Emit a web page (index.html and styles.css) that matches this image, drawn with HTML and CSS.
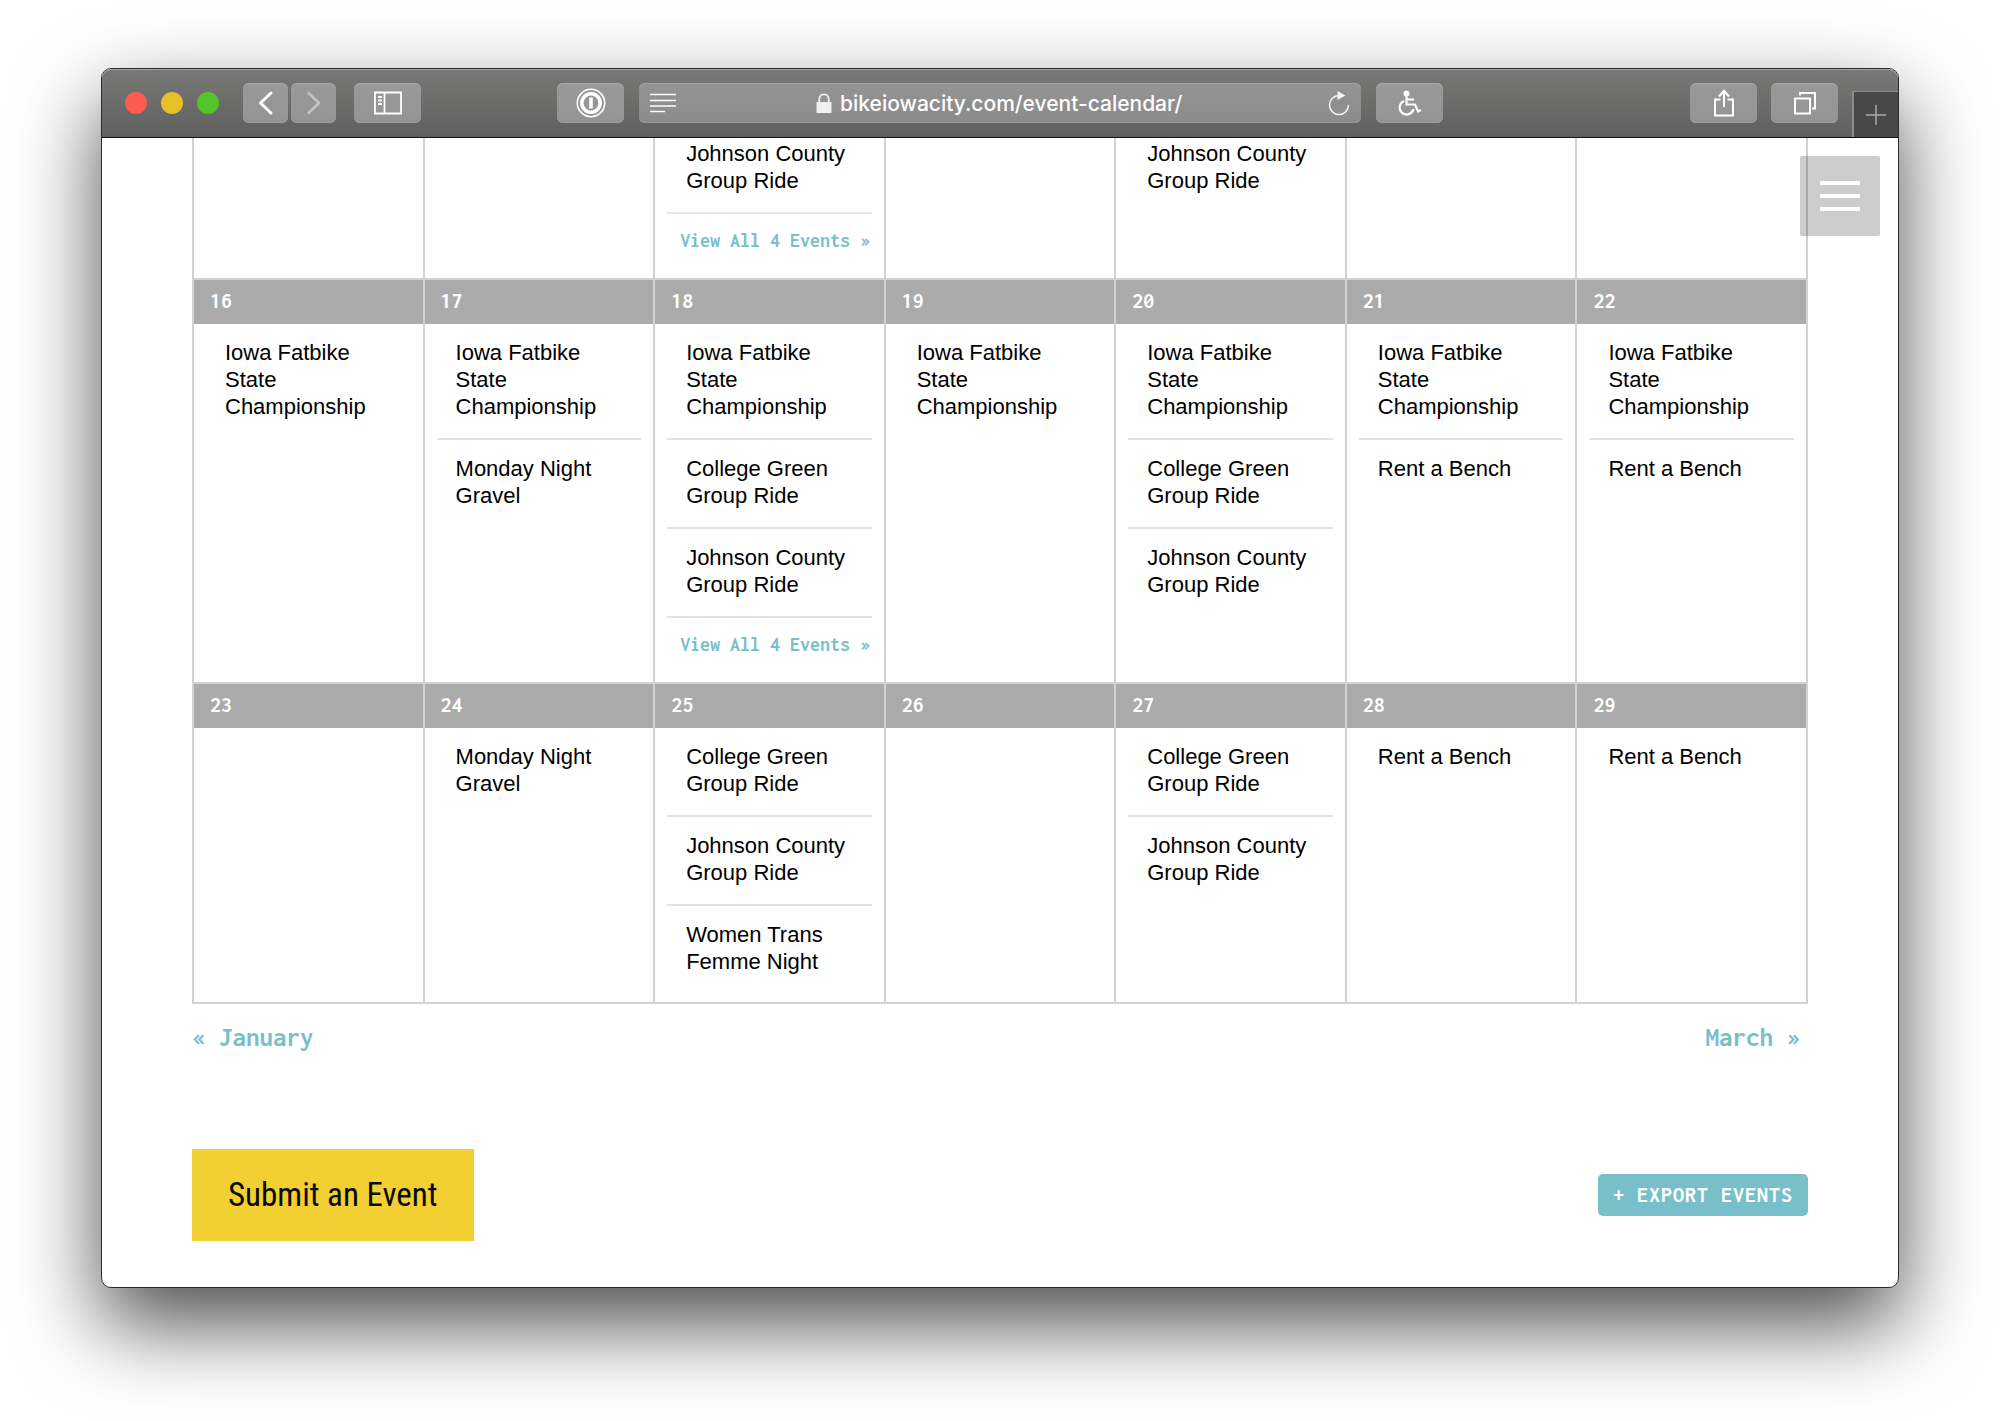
FILE: index.html
```html
<!DOCTYPE html>
<html lang="en">
<head>
<meta charset="utf-8">
<title>Event Calendar</title>
<link rel="stylesheet" href="styles.css">
</head>
<body>
<div class="window">
    <header class="toolbar">
        <div class="tools">
            <div class="lights">
                <button class="light close" aria-label="Close"></button>
                <button class="light min" aria-label="Minimize"></button>
                <button class="light max" aria-label="Zoom"></button>
            </div>
            <div class="history">
                <button class="btn narrow" aria-label="Back"><svg width="45" height="38" viewBox="0 0 45 38"><path d="M28 9 17.500 19 28 29" fill="none" stroke="#fff" stroke-width="3" stroke-linecap="round" stroke-linejoin="round"/></svg></button>
                <button class="btn narrow" aria-label="Forward"><svg width="45" height="38" viewBox="0 0 45 38"><path d="M17.500 9 28 19 17.500 29" fill="none" stroke="#c4c4c4" stroke-width="2.500" stroke-linecap="round" stroke-linejoin="round"/></svg></button>
            </div>
            <button class="btn" aria-label="Sidebar"><svg width="28" height="24" viewBox="0 0 28 24"><path d="M1 1.500h26v21H1zM10.500 1.500v21M4 6h4M4 9.500h4M4 13h4" fill="none" stroke="#fff" stroke-width="1.800"/></svg></button>
        </div>
        <div class="location">
            <button class="btn" aria-label="Password manager"><svg width="30" height="30" viewBox="0 0 30 30"><circle cx="15" cy="15" r="13.700" fill="none" stroke="#fff" stroke-width="1.600"/><circle cx="15" cy="15" r="9.200" fill="none" stroke="#fff" stroke-width="3.600"/><path d="M13.200 9.500h3.600v11h-3.600z" fill="#fff"/></svg></button>
            <div class="address">
                <button class="plain" aria-label="Reader"><svg width="26" height="20" viewBox="0 0 26 20"><path d="M0 1.500h26M0 7.500h26M0 13h26M0 18.500h15" stroke="#fff" stroke-width="1.600"/></svg></button>
                <label class="url">
                    <svg width="16" height="20" viewBox="0 0 16 20"><path d="M.5 9h15v11H.5z" fill="#f0f0f0"/><path d="M3.300 9V6a4.700 4.700 0 0 1 9.400 0v3" fill="none" stroke="#f0f0f0" stroke-width="1.800"/></svg>
                    <input type="text" value="bikeiowacity.com/event-calendar/" aria-label="Address">
                </label>
                <button class="plain" aria-label="Reload"><svg width="22" height="26" viewBox="0 0 22 26"><path d="M11 5.500a9.500 9.500 0 1 0 9.500 9.500" fill="none" stroke="#f4f4f4" stroke-width="1.600"/><path d="M9.500 1 17.500 5.500 9.500 10z" fill="#f4f4f4"/></svg></button>
            </div>
            <button class="btn" aria-label="Accessibility"><svg width="24" height="26" viewBox="0 0 24 26"><circle cx="8.500" cy="3.500" r="3" fill="#fff"/><path d="M8.500 6v8.500h8.500l3 7 3-1.500M9 9.500h7" fill="none" stroke="#fff" stroke-width="2.200"/><path d="M6 11A7 7 0 1 0 15.500 19" fill="none" stroke="#fff" stroke-width="2.200"/></svg></button>
        </div>
        <div class="tools end">
            <button class="btn" aria-label="Share"><svg width="22" height="28" viewBox="0 0 22 28"><path d="M7.500 10.500H2v16h18v-16h-5.500M11 18V2.500" fill="none" stroke="#fff" stroke-width="2"/><path d="M6 7.500 11 2l5 5.500" fill="none" stroke="#fff" stroke-width="2.200"/></svg></button>
            <button class="btn" aria-label="Show tabs"><svg width="24" height="24" viewBox="0 0 24 24"><path d="M2 7.500h15v15H2zM7 4.500V2h15v15.500h-3" fill="none" stroke="#fff" stroke-width="2"/></svg></button>
            <button class="newtab" aria-label="New tab"><svg width="20" height="20" viewBox="0 0 20 20"><path d="M0 10h20M10 0v20" stroke="#aaa" stroke-width="1.500"/></svg></button>
        </div>
    </header>

    <main class="page">
        <button class="menu" aria-label="Menu"><span></span><span></span><span></span></button>

        <table class="calendar">
            <tbody>
                <tr class="cut">
                    <td></td>
                    <td></td>
                    <td>
                        <div class="event"><a href="#">Johnson County Group Ride</a></div>
                        <div class="viewall"><a href="#">View All 4 Events »</a></div>
                    </td>
                    <td></td>
                    <td><div class="event"><a href="#">Johnson County Group Ride</a></div></td>
                    <td></td>
                    <td></td>
                </tr>
                <tr>
                    <td>
                        <div class="day">16</div>
                        <div class="event"><a href="#">Iowa Fatbike State Championship</a></div>
                    </td>
                    <td>
                        <div class="day">17</div>
                        <div class="event"><a href="#">Iowa Fatbike State Championship</a></div>
                        <div class="event"><a href="#">Monday Night Gravel</a></div>
                    </td>
                    <td>
                        <div class="day">18</div>
                        <div class="event"><a href="#">Iowa Fatbike State Championship</a></div>
                        <div class="event"><a href="#">College Green Group Ride</a></div>
                        <div class="event"><a href="#">Johnson County Group Ride</a></div>
                        <div class="viewall"><a href="#">View All 4 Events »</a></div>
                    </td>
                    <td>
                        <div class="day">19</div>
                        <div class="event"><a href="#">Iowa Fatbike State Championship</a></div>
                    </td>
                    <td>
                        <div class="day">20</div>
                        <div class="event"><a href="#">Iowa Fatbike State Championship</a></div>
                        <div class="event"><a href="#">College Green Group Ride</a></div>
                        <div class="event"><a href="#">Johnson County Group Ride</a></div>
                    </td>
                    <td>
                        <div class="day">21</div>
                        <div class="event"><a href="#">Iowa Fatbike State Championship</a></div>
                        <div class="event"><a href="#">Rent a Bench</a></div>
                    </td>
                    <td>
                        <div class="day">22</div>
                        <div class="event"><a href="#">Iowa Fatbike State Championship</a></div>
                        <div class="event"><a href="#">Rent a Bench</a></div>
                    </td>
                </tr>
                <tr class="last">
                    <td><div class="day">23</div></td>
                    <td>
                        <div class="day">24</div>
                        <div class="event"><a href="#">Monday Night Gravel</a></div>
                    </td>
                    <td>
                        <div class="day">25</div>
                        <div class="event"><a href="#">College Green Group Ride</a></div>
                        <div class="event"><a href="#">Johnson County Group Ride</a></div>
                        <div class="event"><a href="#">Women Trans Femme Night</a></div>
                    </td>
                    <td><div class="day">26</div></td>
                    <td>
                        <div class="day">27</div>
                        <div class="event"><a href="#">College Green Group Ride</a></div>
                        <div class="event"><a href="#">Johnson County Group Ride</a></div>
                    </td>
                    <td>
                        <div class="day">28</div>
                        <div class="event"><a href="#">Rent a Bench</a></div>
                    </td>
                    <td>
                        <div class="day">29</div>
                        <div class="event"><a href="#">Rent a Bench</a></div>
                    </td>
                </tr>
            </tbody>
        </table>

        <nav class="months">
            <a href="#">« January</a>
            <a href="#">March »</a>
        </nav>

        <div class="actions">
            <a class="submit" href="#">Submit an Event</a>
            <a class="export" href="#">+ Export Events</a>
        </div>
    </main>
</div>
</body>
</html>
```
FILE: styles.css
```css
* { box-sizing:border-box; }
body { margin:0; background:#fff; font:22px/27px "Helvetica Neue","Liberation Sans",Arial,sans-serif; color:#000; }
a { color:#78bfca; text-decoration:none; }
button { margin:0; padding:0; border:0; background:none; }
svg { display:block; }

.window { margin:68px 101px 133px; border:1px solid #2c2c2c; border-radius:10px; background:#fff; box-shadow:0 36px 84px rgba(0,0,0,0.7); }

/* browser bar */
.toolbar { display:grid; grid-template-columns:1fr 2fr 1fr; gap:12px; height:69px; border-bottom:1px solid #111; border-radius:9px 9px 0 0; background:linear-gradient(#787876,#606060); box-shadow:inset 0 1px #a4a4a4; overflow:hidden; }
.tools { display:flex; align-items:center; padding-left:23px; }
.tools.end { justify-content:flex-end; gap:14px; padding-left:0; }
.lights { display:flex; gap:14px; margin-right:24px; }
.light { width:22px; height:22px; border-radius:50%; }
.close { background:#ff5b52; }
.min { background:#e6c02a; }
.max { background:#54c42d; }
.history { display:flex; gap:3px; margin-right:18px; }
.btn { display:flex; align-items:center; justify-content:center; flex:none; width:67px; height:40px; border-radius:6px; background:linear-gradient(#999,#949494); box-shadow:inset 0 1px #aaa, inset 0 -1px #9e9e9e; }
.narrow { width:45px; }
.location { display:flex; align-items:center; gap:15px; }
.address { display:flex; align-items:center; justify-content:space-between; flex:1; min-width:0; height:40px; padding:0 11px; border-radius:6px; background:linear-gradient(#949494,#8b8b8b); box-shadow:inset 0 1px #a4a4a4, inset 0 -1px #999; }
.url { display:flex; align-items:center; gap:8px; }
.url input { width:348px; padding:2px 0 0; border:0; background:none; color:#fff; font:500 21px/28px Inter,sans-serif; }
.newtab { display:flex; align-items:center; justify-content:center; align-self:flex-end; width:46px; height:46px; border:1px solid #8c8c8c; border-width:1px 0 0 2px; background:#484848; }

/* page */
.page { position:relative; padding:0 90px 46px; }
.menu { position:absolute; top:18px; right:18px; display:flex; flex-direction:column; align-items:center; justify-content:center; gap:9px; width:80px; height:80px; border-radius:2px; background:rgba(0,0,0,0.2); }
.menu span { width:40px; height:4px; background:#fff; }

.calendar { width:100%; table-layout:fixed; border-collapse:collapse; }
.calendar td { padding:0; border:2px solid #d2d2d2; vertical-align:top; }
.calendar .cut td { border-top:0; }
.calendar .last td { padding-bottom:9px; }
.day { height:44px; padding-left:16px; background:#ababab; color:#fff; font:bold 22px/42px Inconsolata,"DejaVu Sans Mono",monospace; }
.event { margin:0 12px; padding:15px 18px 18px 19px; border-bottom:2px solid #e2e2e2; }
.event:last-child { border-bottom:0; }
.event a { color:#000; }
.cut .event { padding-top:2px; }
.viewall { height:64px; padding:15px 0 0 25px; font:bold 20px/24px Inconsolata,"DejaVu Sans Mono",monospace; white-space:nowrap; }

.months { display:flex; justify-content:space-between; padding:19px 8px 0 0; font:bold 27px/28px Inconsolata,"DejaVu Sans Mono",monospace; }
.actions { display:flex; align-items:center; justify-content:space-between; margin-top:98px; }
.submit { padding:0 36px; background:#f2d033; color:#0a0a0a; font:33px/92px "Roboto Condensed",Roboto,sans-serif; }
.export { padding:0 15px; border-radius:5px; background:#78bfca; color:#fff; font:bold 22px/42px Inconsolata,"DejaVu Sans Mono",monospace; letter-spacing:1px; text-transform:uppercase; }
```
